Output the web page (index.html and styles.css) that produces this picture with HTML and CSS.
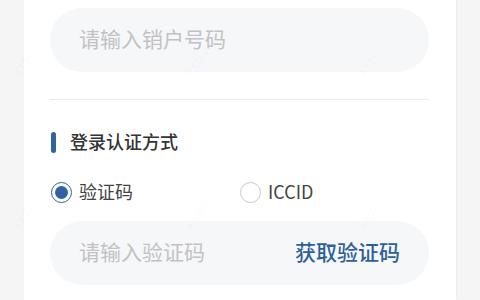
FILE: index.html
```html
<!DOCTYPE html>
<html lang="zh">
<head>
<meta charset="utf-8">
<link rel="stylesheet" href="styles.css">
</head>
<body>
<div class="card">
  <div class="field">
    <span class="placeholder">请输入销户号码</span>
  </div>
  <div class="divider"></div>
  <div class="title">
    <span class="bar"></span>
    <span class="title-text">登录认证方式</span>
  </div>
  <div class="options">
    <div class="option option-first">
      <span class="radio checked"><span class="dot"></span></span>
      <span class="label">验证码</span>
    </div>
    <div class="option">
      <span class="radio"></span>
      <span class="label">ICCID</span>
    </div>
  </div>
  <div class="field field-code">
    <span class="placeholder">请输入验证码</span>
    <span class="get-code">获取验证码</span>
  </div>
</div>
<div class="wm wm1">宝塔网</div>
<div class="wm wm2">宝塔网</div>
<div class="wm wm3">宝塔网</div>
<div class="wm wm4">宝塔网</div>
<div class="wm wm5">宝塔网</div>
<div class="wm wm6">宝塔网</div>
</body>
</html>
```
FILE: styles.css
```css
html, body {
  margin: 0;
  padding: 0;
}
body {
  background: #f5f5f5;
  width: 480px;
  height: 300px;
  overflow: hidden;
  position: relative;
  font-family: "Noto Sans CJK SC", "Noto Sans", sans-serif;
}
.card {
  margin-left: 24px;
  width: 432px;
  height: 300px;
  box-sizing: border-box;
  background: #ffffff;
  padding: 8px 27px 0 26px;
  box-shadow: 1px 0 3px rgba(0, 0, 0, 0.04);
}
.field {
  height: 64px;
  box-sizing: border-box;
  border-radius: 32px;
  background: #f6f7f9;
  display: flex;
  align-items: center;
  justify-content: space-between;
  padding: 0 29px 4px 29px;
}
.placeholder {
  font-size: 21px;
  color: #c2c2c4;
  line-height: 1;
}
.get-code {
  font-size: 21px;
  color: #2e5f99;
  font-weight: 500;
  line-height: 1;
}
.divider {
  margin-top: 27px;
  height: 1px;
  background: #ececec;
}
.title {
  margin-top: 30px;
  height: 24px;
  display: flex;
  align-items: center;
  padding-left: 1px;
}
.bar {
  width: 5px;
  height: 21px;
  border-radius: 3px;
  background: #2f63a3;
}
.title-text {
  margin-left: 14px;
  margin-bottom: 3px;
  font-size: 18px;
  color: #333333;
  font-weight: 500;
  line-height: 1;
}
.options {
  margin-top: 26px;
  height: 24px;
  display: flex;
  align-items: center;
  padding-left: 1px;
}
.option {
  display: flex;
  align-items: center;
}
.option-first {
  width: 189px;
}
.radio {
  width: 21px;
  height: 21px;
  box-sizing: border-box;
  border-radius: 50%;
  border: 1.5px solid #c8c8c8;
  display: flex;
  align-items: center;
  justify-content: center;
}
.radio.checked {
  border-color: #2f63a3;
}
.dot {
  width: 13px;
  height: 13px;
  border-radius: 50%;
  background: #2f63a3;
}
.label {
  margin-left: 7px;
  margin-bottom: 3px;
  font-size: 18px;
  color: #444444;
  line-height: 1;
}
.field-code {
  margin-top: 17px;
}
.wm {
  position: absolute;
  font-size: 11px;
  color: rgba(0, 0, 0, 0.04);
  transform: rotate(-50deg);
  white-space: nowrap;
}
.wm1 { left: 7px; top: 55px; }
.wm2 { left: 179px; top: 55px; }
.wm3 { left: 352px; top: 55px; }
.wm4 { left: 7px; top: 208px; }
.wm5 { left: 179px; top: 208px; }
.wm6 { left: 352px; top: 208px; }
```
